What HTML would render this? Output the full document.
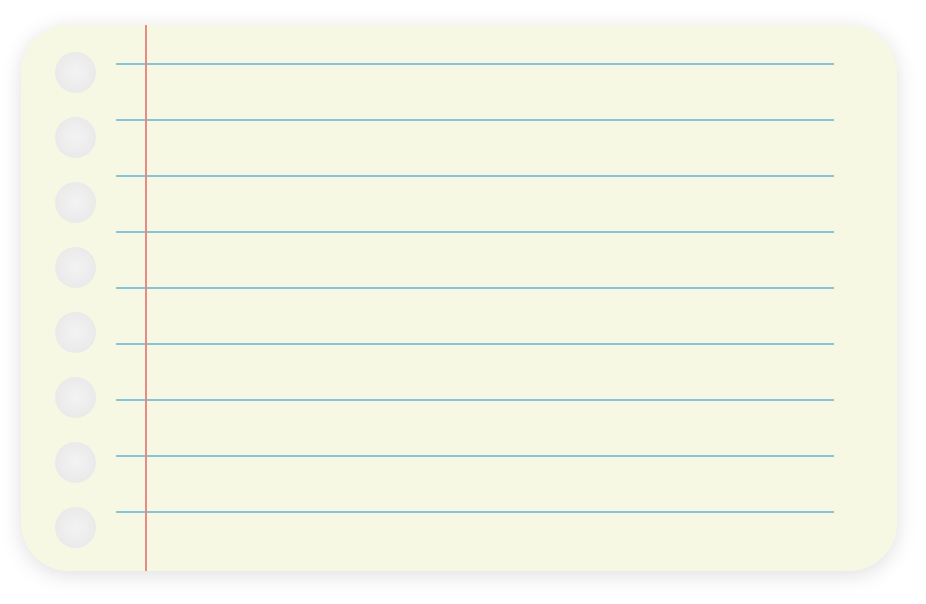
<!DOCTYPE html>
<html><head><style>
html,body{margin:0;padding:0;background:#fff;width:926px;height:604px;overflow:hidden}
.card{position:absolute;left:21px;top:25px;width:876px;height:546px;background:#f7f8e4;border-radius:48px;box-shadow:0 4px 22px rgba(0,0,0,0.13);overflow:hidden}
.red{position:absolute;left:124px;top:0;width:2px;height:546px;background:#e88a86}
.l{position:absolute;left:95px;width:718px;height:2px;background:#88c4d8}
.h{position:absolute;left:34px;width:41px;height:41px;border-radius:50%;background:radial-gradient(circle,#f3f3f3 0%,#e6e6e6 100%)}
</style></head><body>
<div class="card">
<div class="l" style="top:38px"></div><div class="l" style="top:94px"></div><div class="l" style="top:150px"></div><div class="l" style="top:206px"></div><div class="l" style="top:262px"></div><div class="l" style="top:318px"></div><div class="l" style="top:374px"></div><div class="l" style="top:430px"></div><div class="l" style="top:486px"></div>
<div class="red"></div>
<div class="h" style="top:27px"></div><div class="h" style="top:92px"></div><div class="h" style="top:157px"></div><div class="h" style="top:222px"></div><div class="h" style="top:287px"></div><div class="h" style="top:352px"></div><div class="h" style="top:417px"></div><div class="h" style="top:482px"></div>
</div>
</body></html>
